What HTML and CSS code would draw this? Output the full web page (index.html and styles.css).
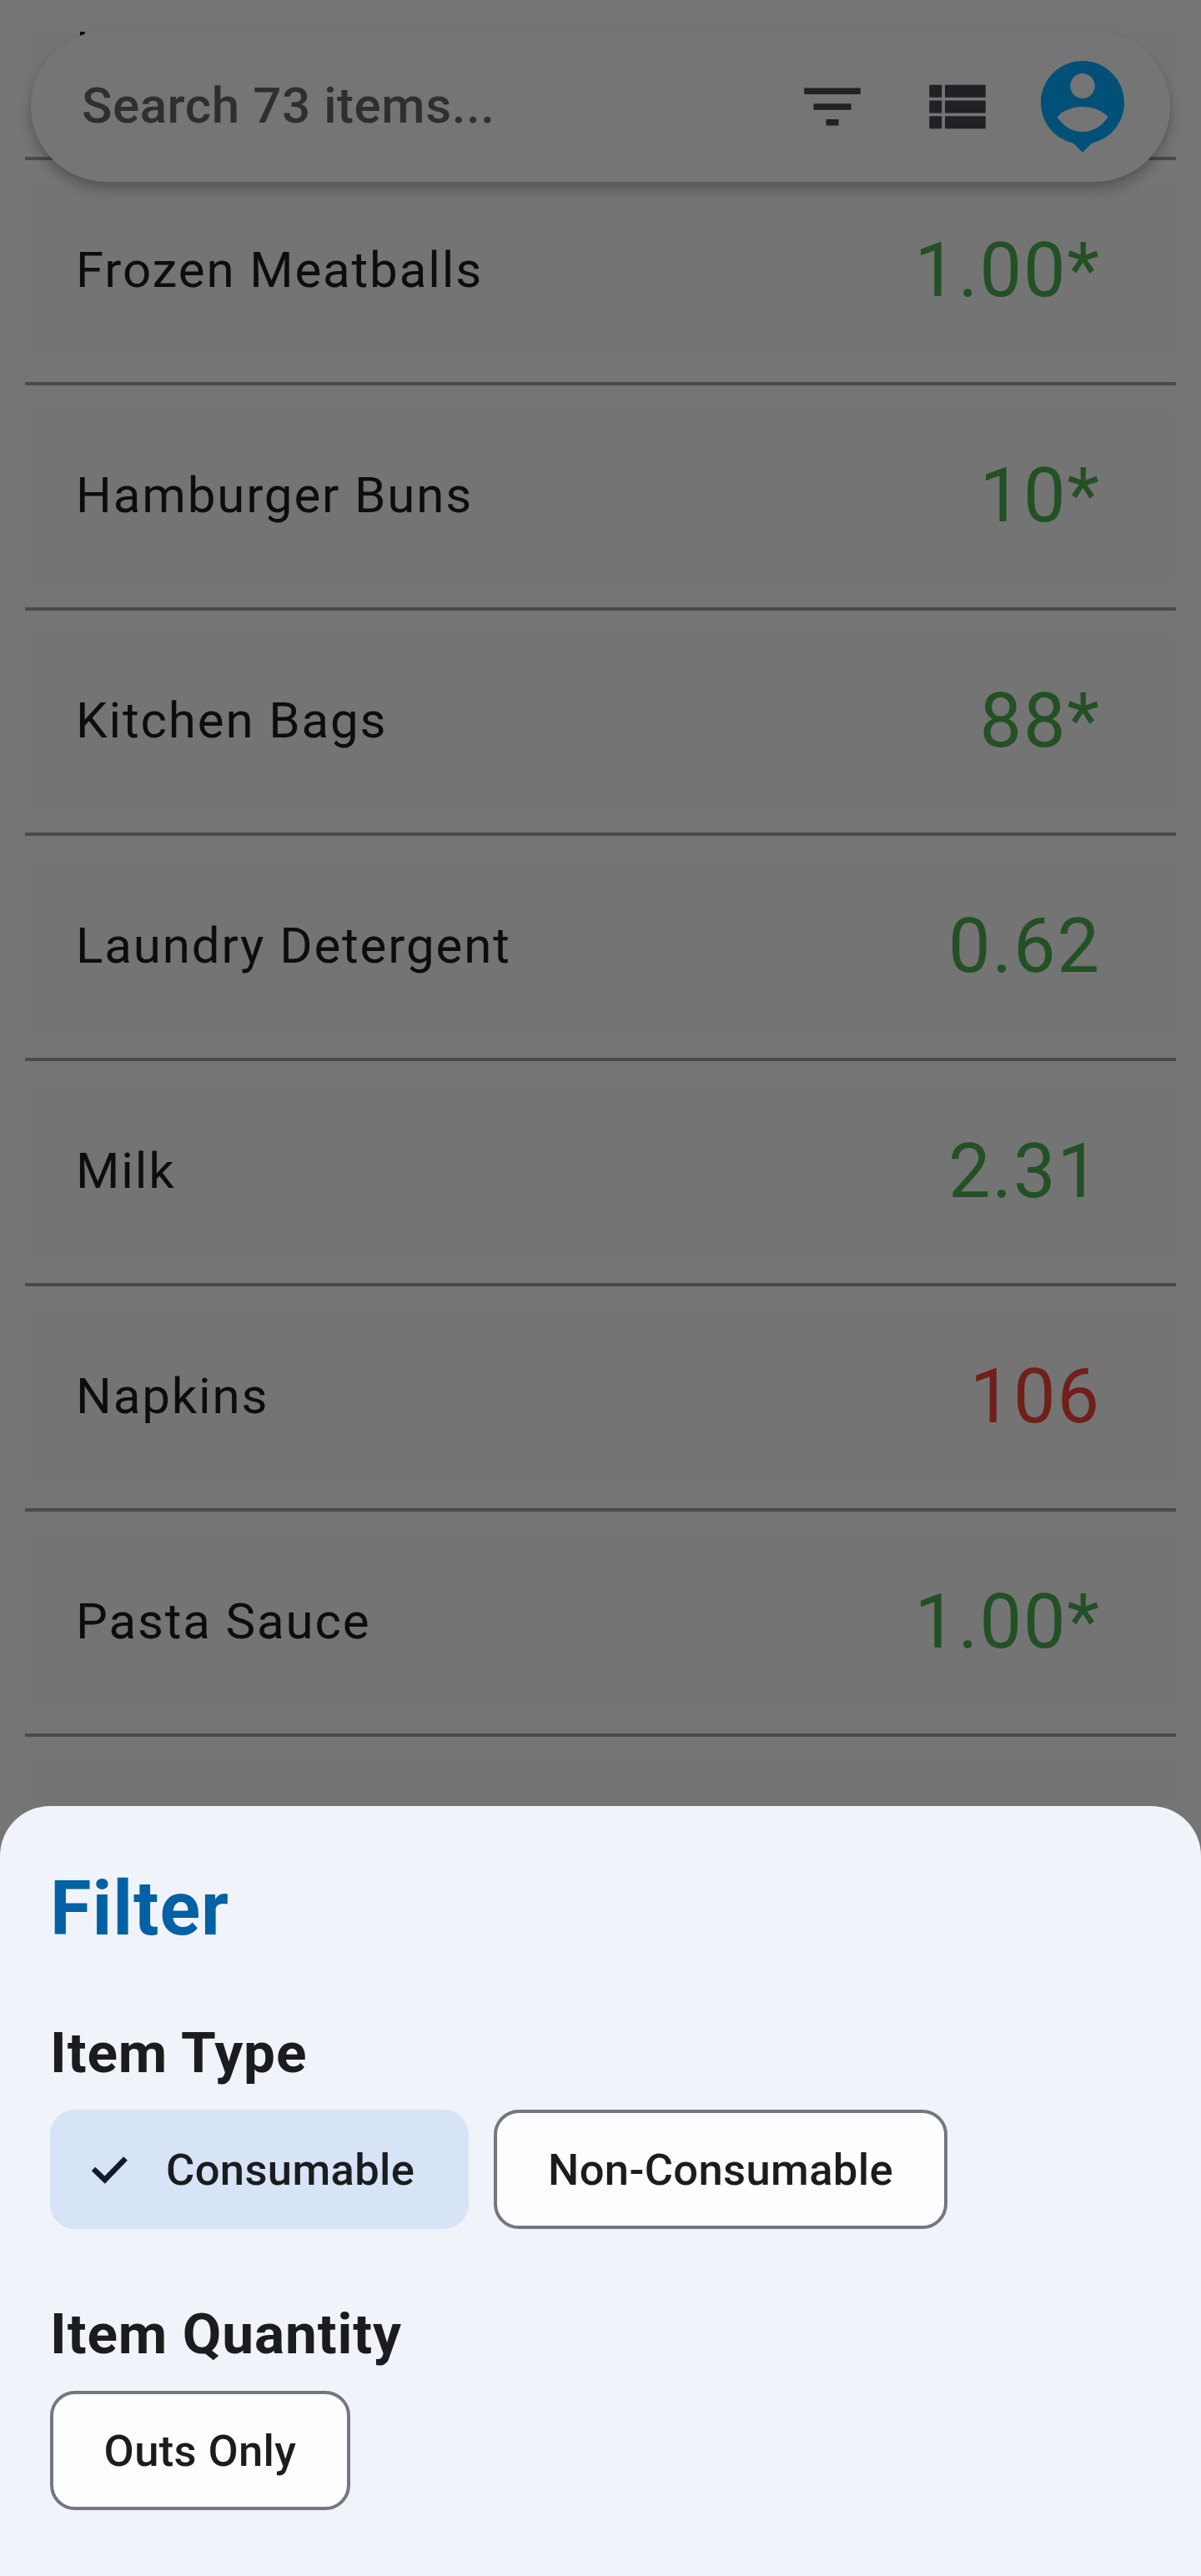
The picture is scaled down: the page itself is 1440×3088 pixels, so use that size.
FILE: index.html
```html
<!DOCTYPE html>
<html lang="en">
<head>
<meta charset="utf-8">
<title>Items</title>
<link rel="stylesheet" href="styles.css">
</head>
<body>
<div class="screen">
  <main class="list">
    <div class="row row-partial"><div class="row-body"><span class="name">E</span></div></div>
    <div class="row"><div class="row-body"><span class="name">Frozen Meatballs</span><span class="qty">1.00*</span></div></div>
    <div class="row"><div class="row-body"><span class="name">Hamburger Buns</span><span class="qty">10*</span></div></div>
    <div class="row"><div class="row-body"><span class="name">Kitchen Bags</span><span class="qty">88*</span></div></div>
    <div class="row"><div class="row-body"><span class="name">Laundry Detergent</span><span class="qty">0.62</span></div></div>
    <div class="row"><div class="row-body"><span class="name">Milk</span><span class="qty">2.31</span></div></div>
    <div class="row"><div class="row-body"><span class="name">Napkins</span><span class="qty qty-out">106</span></div></div>
    <div class="row"><div class="row-body"><span class="name">Pasta Sauce</span><span class="qty">1.00*</span></div></div>
    <div class="row"><div class="row-body"></div></div>
  </main>

  <header class="search">
    <span class="search-text">Search 73 items...</span>
    <svg class="icon icon-filter" viewBox="0 0 24 24"><path d="M10 18h4v-2h-4v2zM3 6v2h18V6H3zm3 7h12v-2H6v2z"/></svg>
    <svg class="icon icon-view" viewBox="0 0 24 24"><path d="M3 14h4v-4H3v4zm0 5h4v-4H3v4zM3 9h4V5H3v4zm5 5h13v-4H8v4zm0 5h13v-4H8v4zM8 5v4h13V5H8z"/></svg>
    <svg class="avatar" viewBox="0 0 24 24"><path d="M12 2C6.48 2 2 6.48 2 12c0 4.6 3.1 8.46 7.33 9.62.34.09.66.27.91.52L12 24l1.76-1.86c.25-.25.57-.43.91-.52C18.9 20.46 22 16.6 22 12c0-5.52-4.48-10-10-10z"/><path class="cut" d="M12 5c1.63 0 2.95 1.35 2.95 3s-1.32 3-2.95 3-2.95-1.35-2.95-3 1.32-3 2.95-3zM12 13c2 0 4.9.8 6.1 2.500-1.500 2.100-3.500 3.500-6.100 3.500s-4.600-1.400-6.100-3.500c1.200-1.700 4.100-2.500 6.100-2.500z"/></svg>
  </header>

  <section class="sheet">
    <h1 class="sheet-title">Filter</h1>
    <h2 class="group-title">Item Type</h2>
    <div class="chips">
      <button class="chip chip-on"><svg class="check" viewBox="0 0 60 60"><path d="M11 29l13.700 13.100L49.500 16.500"/></svg>Consumable</button>
      <button class="chip chip-non">Non-Consumable</button>
    </div>
    <h2 class="group-title group-next">Item Quantity</h2>
    <div class="chips">
      <button class="chip chip-outs">Outs Only</button>
    </div>
  </section>
</div>
</body>
</html>
```
FILE: styles.css
```css
* { box-sizing: border-box; margin: 0; }
body { font-family: Roboto, sans-serif; background: #757575; }
.screen {
  position: relative;
  width: 1440px;
  height: 3088px;
  overflow: hidden;
  background: #757575;
  display: flex;
  flex-direction: column;
  justify-content: space-between;
}

/* item list */
.list { height: 2127px; margin-top: 38px; padding: 0 30px; overflow: hidden; flex: none; }
.row { height: 270px; padding: 28px 2px 30px; border-bottom: 4px solid #4a4a4a; }
.row-partial { margin-top: -116px; }
.row-body {
  height: 208px;
  padding: 0 88px 0 59px;
  background: #747474;
  display: flex;
  align-items: center;
  justify-content: space-between;
}
.name { font-size: 60px; letter-spacing: 1.875px; color: #0c0d0e; white-space: nowrap; padding-bottom: 1px; }
.qty { font-size: 90px; letter-spacing: 1.875px; color: #235025; white-space: nowrap; }
.qty-out { color: #701f19; }

/* floating search bar */
.search {
  position: absolute;
  left: 37px;
  top: 37px;
  width: 1366px;
  height: 181px;
  border-radius: 91px;
  background: #757575;
  box-shadow: 0 11px 16px rgba(0, 0, 0, .2), 0 3px 6px rgba(0, 0, 0, .08);
  display: flex;
  align-items: center;
  padding: 0 45px 0 61px;
}
.search-text { flex: 1; font-size: 60px; font-weight: 500; letter-spacing: .6px; color: #2f2f30; padding-bottom: 2px; }
.icon { width: 90px; height: 90px; fill: #1f2124; }
.icon-filter { margin-right: 60px; }
.icon-view { margin-right: 45px; }
.avatar { width: 120px; height: 120px; fill: #005078; margin-bottom: 10px; }
.cut { fill: #757575; }

/* filter sheet */
.sheet {
  height: 923px;
  flex: none;
  border-radius: 60px 60px 0 0;
  background: #f0f3fa;
  padding: 64px 60px 0;
  display: flex;
  flex-direction: column;
  align-items: flex-start;
}
.sheet-title { font-size: 90px; line-height: 120px; font-weight: 700; letter-spacing: 1px; color: #0061a4; }
.group-title { font-size: 67.5px; line-height: 90px; font-weight: 700; letter-spacing: .9px; color: #1a1c1e; margin-top: 67px; }
.group-next { margin-top: 81px; }
.chips { display: flex; gap: 30px; margin-top: 23px; }
.chip {
  height: 143px;
  border: 4px solid #73777f;
  border-radius: 30px;
  background: #fdfcff;
  font-family: inherit;
  font-size: 52.5px;
  font-weight: 500;
  letter-spacing: .375px;
  color: #1a1c1e;
  white-space: nowrap;
  display: flex;
  align-items: center;
  justify-content: center;
  padding: 0;
}
.chip-on { width: 502px; border: 0; background: #d7e3f7; justify-content: flex-start; padding-left: 41px; }
.check { width: 60px; height: 60px; margin-right: 38px; fill: none; stroke: #101c2b; stroke-width: 6.5; }
.chip-non { width: 544px; }
.chip-outs { width: 360px; }
```
